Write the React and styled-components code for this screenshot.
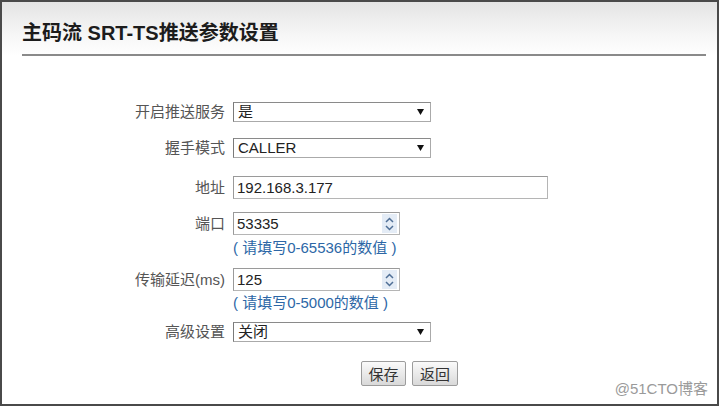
import React from "react";
import styled, { createGlobalStyle } from "styled-components";

const Global = createGlobalStyle`
  html, body { margin: 0; padding: 0; background: #fff; }
  body { font-family: "Liberation Sans", "Noto Sans CJK SC", sans-serif; }
  * { box-sizing: border-box; }
`;

const Frame = styled.div`
  position: relative;
  width: 719px;
  height: 406px;
  border: 2px solid #4a4a4a;
  background: #fff;
  overflow: hidden;
  font-size: 15px;
`;

const Header = styled.div`
  background: linear-gradient(to bottom, #e4e4e4 0%, #f6f6f6 60%, #ffffff 100%);
  padding: 0 11px 0 20px;
`;

const Title = styled.h1`
  margin: 0;
  padding: 18px 0 8px;
  line-height: 26px;
  font-size: 20px;
  font-weight: bold;
  color: #1c1c1c;
  border-bottom: 2px solid #8a8a8a;
`;

const Form = styled.div`
  display: flex;
  flex-direction: column;
`;

const Row = styled.div`
  display: flex;
  align-items: flex-start;
  margin-top: ${(p) => p.$mt}px;
`;

const Label = styled.div`
  width: 231px;
  padding-right: 8px;
  text-align: right;
  color: #555;
  line-height: ${(p) => p.$h}px;
  white-space: nowrap;
`;

const Field = styled.div`
  display: flex;
  flex-direction: column;
`;

const SelectBox = styled.div`
  width: 198px;
  height: 20px;
  display: flex;
  align-items: center;
  justify-content: space-between;
  padding: 0 6px 0 4px;
  border: 1px solid #aaa;
  border-left-color: #7a7a7a;
  border-top-color: #8a8a8a;
  background: #fff;
  color: #222;
  line-height: 18px;
`;

const TextBox = styled.div`
  width: ${(p) => p.$w}px;
  height: 23px;
  display: flex;
  align-items: center;
  justify-content: space-between;
  padding: 0 2px 0 3px;
  border: 1px solid #b5b5b5;
  border-top-color: #9a9a9a;
  border-left-color: #9a9a9a;
  background: #fff;
  color: #222;
`;

const Spinner = styled.div`
  width: 15px;
  height: 19px;
  background: #e4ecf6;
  display: flex;
  flex-direction: column;
  align-items: center;
  justify-content: center;
  gap: 2px;
`;

const Hint = styled.div`
  margin-top: ${(p) => p.$mt}px;
  line-height: 16px;
  color: #2d67a6;
  white-space: nowrap;
`;

const Buttons = styled.div`
  display: flex;
  gap: 6px;
  margin-top: 19px;
  margin-left: 359px;
`;

const Button = styled.button`
  width: ${(p) => p.$w}px;
  height: 25px;
  padding: 0;
  font: inherit;
  font-size: 15px;
  color: #333;
  border: 1px solid #9c9c9c;
  border-radius: 2px;
  background: linear-gradient(to bottom, #fafafa 0%, #e8e8e8 55%, #d9d9d9 100%);
`;

const Watermark = styled.div`
  position: absolute;
  right: 9px;
  bottom: 6px;
  color: #9a9a9a;
  font-size: 15px;
  line-height: 18px;
`;

const Arrow = () => (
  <svg width="7" height="6" viewBox="0 0 7 6">
    <path d="M0 0 H7 L3.5 6 Z" fill="#111" />
  </svg>
);

const Spin = () => (
  <Spinner>
    <svg width="9" height="6" viewBox="0 0 9 6">
      <path d="M1 5 L4.5 1.5 L8 5" stroke="#4f6f96" strokeWidth="1.5" fill="none" />
    </svg>
    <svg width="9" height="6" viewBox="0 0 9 6">
      <path d="M1 1 L4.5 4.5 L8 1" stroke="#4f6f96" strokeWidth="1.5" fill="none" />
    </svg>
  </Spinner>
);

export default function App() {
  return (
    <>
      <Global />
      <Frame>
        <Header>
          <Title>主码流 SRT-TS推送参数设置</Title>
        </Header>
        <Form>
          <Row $mt={46}>
            <Label $h={20}>开启推送服务</Label>
            <SelectBox>
              <span>是</span>
              <Arrow />
            </SelectBox>
          </Row>
          <Row $mt={16}>
            <Label $h={20}>握手模式</Label>
            <SelectBox>
              <span>CALLER</span>
              <Arrow />
            </SelectBox>
          </Row>
          <Row $mt={18}>
            <Label $h={23}>地址</Label>
            <TextBox $w={315}>192.168.3.177</TextBox>
          </Row>
          <Row $mt={13}>
            <Label $h={23}>端口</Label>
            <Field>
              <TextBox $w={167}>
                <span>53335</span>
                <Spin />
              </TextBox>
              <Hint $mt={5}>( 请填写0-65536的数值 )</Hint>
            </Field>
          </Row>
          <Row $mt={12}>
            <Label $h={23}>传输延迟(ms)</Label>
            <Field>
              <TextBox $w={167}>
                <span>125</span>
                <Spin />
              </TextBox>
              <Hint $mt={4}>( 请填写0-5000的数值 )</Hint>
            </Field>
          </Row>
          <Row $mt={11}>
            <Label $h={20}>高级设置</Label>
            <SelectBox>
              <span>关闭</span>
              <Arrow />
            </SelectBox>
          </Row>
          <Buttons>
            <Button $w={45}>保存</Button>
            <Button $w={46}>返回</Button>
          </Buttons>
        </Form>
        <Watermark>@51CTO博客</Watermark>
      </Frame>
    </>
  );
}
